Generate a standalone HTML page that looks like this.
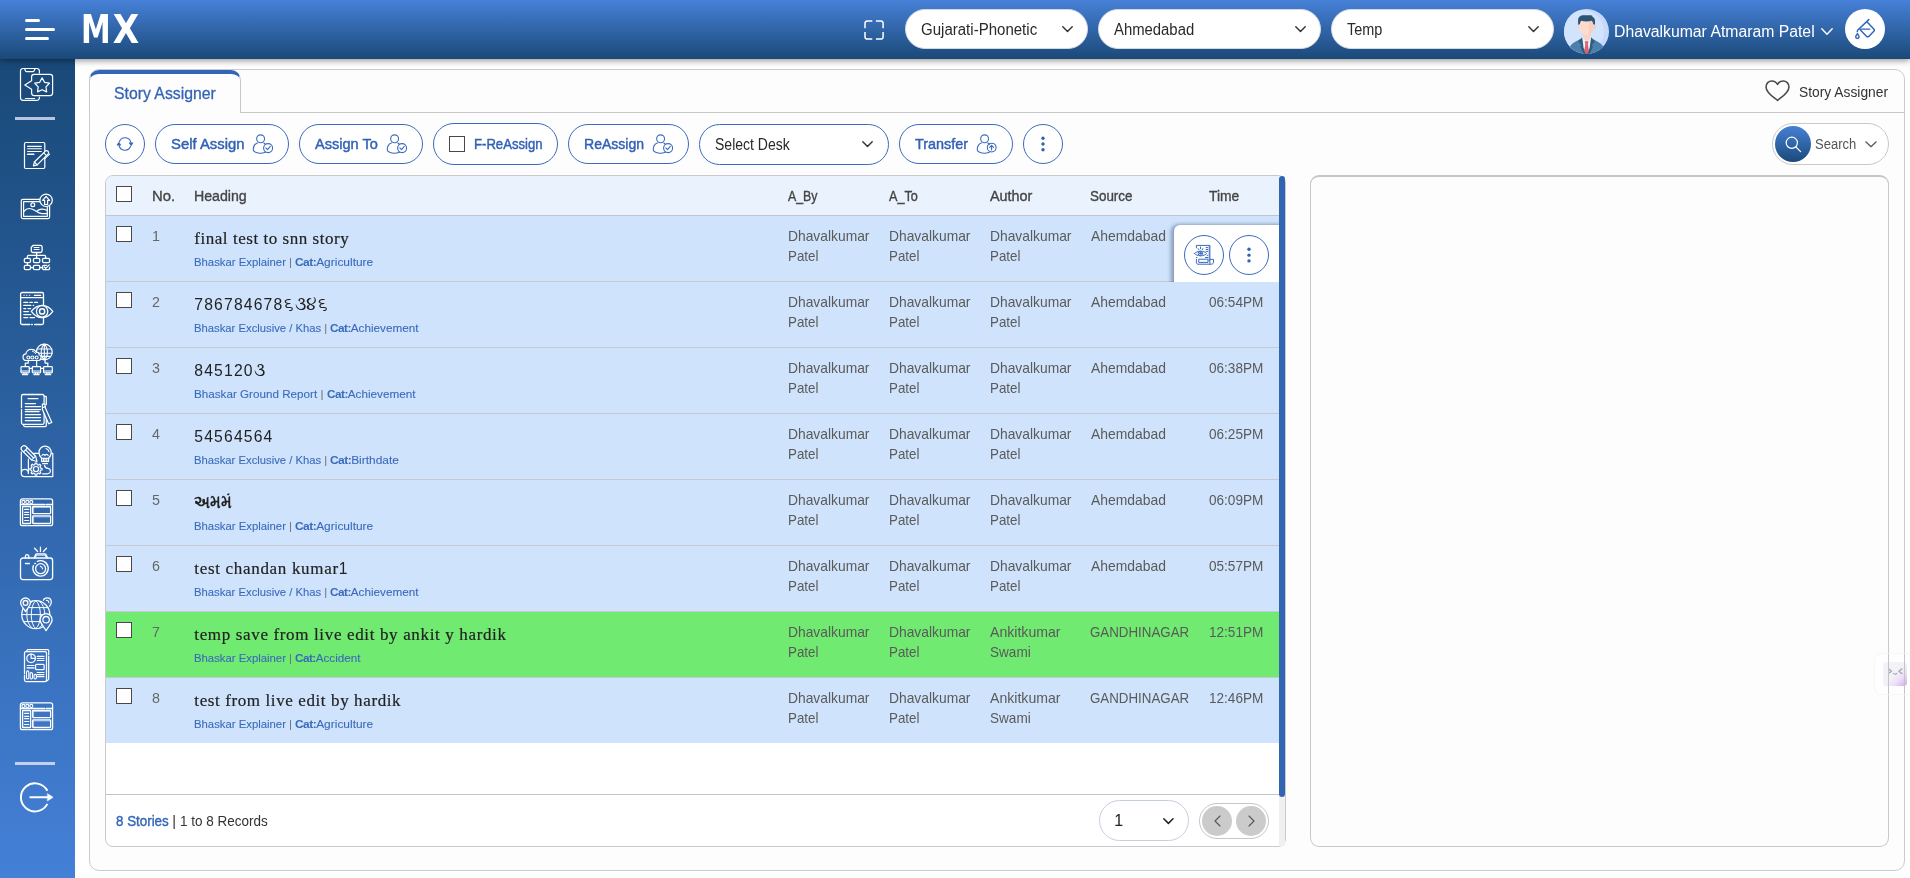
<!DOCTYPE html>
<html lang="en">
<head>
<meta charset="utf-8">
<title>Story Assigner</title>
<style>

*{box-sizing:border-box;margin:0;padding:0}
html,body{width:1910px;height:878px;background:#fff}
#app{position:absolute;left:0;top:0;width:1910px;height:878px;overflow:hidden;will-change:transform;background:#fff}
body{position:relative;font-family:"Liberation Sans",sans-serif;font-size:15px;color:#555}
.t{position:absolute;white-space:pre;line-height:1;display:block;transform-origin:0 0}
.a{position:absolute}
svg{position:absolute;overflow:visible}
.pill{position:absolute;border:1px solid #3b6bbd;border-radius:21px;background:#fff}
.sel{position:absolute;background:#fff;border-radius:20px;border:1px solid #d3d9e2}
.cb{position:absolute;width:16px;height:16px;background:#fff;border:1px solid #494949}
.row{position:absolute;left:106px;width:1173px;height:65px;background:#cfe4fc}
.sep{position:absolute;left:106px;width:1173px;height:1px;background:#c6c9ce}

</style>
</head>
<body>
<div id="app">
<div class="a" style="left:0;top:0;width:1910px;height:59px;background:linear-gradient(180deg,#4781d8 0%,#1a4978 100%);box-shadow:0 1px 7px rgba(0,0,0,.5);z-index:5"></div>
<div class="a" style="z-index:6;left:0;top:0;width:1910px;height:59px">
<div class="a" style="left:25px;top:19px;width:15px;height:3px;border-radius:2px;background:#fff"></div>
<div class="a" style="left:25px;top:28px;width:30px;height:3px;border-radius:2px;background:#fff"></div>
<div class="a" style="left:25px;top:37px;width:24px;height:3px;border-radius:2px;background:#fff"></div>
<span class="t" style="left:81.16px;top:11.44px;font-size:38.6px;color:#fff;font-family:'DejaVu Sans', sans-serif;font-weight:700;transform:scaleX(0.7735)">M<span style="display:inline-block;margin-left:3.09px;transform-origin:0 0;transform:scaleX(1.1489)">X</span></span>
<svg style="left:864.1px;top:20.1px" width="20" height="20" viewBox="0 0 20 20"><path d="M1 8.3V3.2A2.2 2.2 0 0 1 3.2 1H8.3M11.9 1H16.9A2.2 2.2 0 0 1 19.1 3.2V8.3M19.1 11.9V16.9A2.2 2.2 0 0 1 16.9 19.1H11.9M8.3 19.1H3.2A2.2 2.2 0 0 1 1 16.9V11.9" fill="none" stroke="#fff" stroke-width="1.5" stroke-linecap="butt"/></svg>
<div class="sel" style="left:905px;top:9px;width:183px;height:40px"></div>
<span class="t" style="left:920.64px;top:21.86px;font-size:16px;color:#2a2a2a;transform:scaleX(0.9396);">Gujarati-Phonetic</span>
<svg style="left:1061.6px;top:25.9px" width="11" height="6.3" viewBox="0 0 11 6.3"><path d="M0.8 0.8 L5.5 5.5 L10.2 0.8" fill="none" stroke="#333" stroke-width="1.45" stroke-linecap="round" stroke-linejoin="round"/></svg>
<div class="sel" style="left:1098px;top:9px;width:223px;height:40px"></div>
<span class="t" style="left:1114.37px;top:21.86px;font-size:16px;color:#2a2a2a;transform:scaleX(0.9292);">Ahmedabad</span>
<svg style="left:1294.6px;top:25.9px" width="11" height="6.3" viewBox="0 0 11 6.3"><path d="M0.8 0.8 L5.5 5.5 L10.2 0.8" fill="none" stroke="#333" stroke-width="1.45" stroke-linecap="round" stroke-linejoin="round"/></svg>
<div class="sel" style="left:1331px;top:9px;width:223px;height:40px"></div>
<span class="t" style="left:1347.08px;top:21.86px;font-size:16px;color:#2a2a2a;transform:scaleX(0.9030);">Temp</span>
<svg style="left:1527.6px;top:25.9px" width="11" height="6.3" viewBox="0 0 11 6.3"><path d="M0.8 0.8 L5.5 5.5 L10.2 0.8" fill="none" stroke="#333" stroke-width="1.45" stroke-linecap="round" stroke-linejoin="round"/></svg>
<svg style="left:1564px;top:9px" width="45" height="45" viewBox="0 0 45 45">
<defs><clipPath id="avc"><circle cx="22.5" cy="22.5" r="22.5"/></clipPath></defs>
<g clip-path="url(#avc)">
<rect width="45" height="45" fill="#c4d9fb"/>
<circle cx="18.5" cy="22.5" r="21.5" fill="#d1e3fd"/>
<path d="M5.6 38.4 C7.5 34 12.5 32 18.2 29.2 L22.6 40 L27.1 29.2 C32.5 32 37.8 34 39.6 38.4 L40 46 H5 Z" fill="#4b80ad"/>
<path d="M14.3 32.2 L18.2 28.3 L22.6 44.5 L19.5 45 L16.2 37.4 L17.4 36.2 Z" fill="#325d7d"/>
<path d="M30.9 32.2 L27.1 28.3 L22.6 44.5 L25.7 45 L29 37.4 L27.8 36.2 Z" fill="#325d7d"/>
<path d="M18.2 28.3 H27.1 L25.6 39 L22.6 45 L19.6 39 Z" fill="#e9f4fb"/>
<path d="M20.7 32.3 H24.5 L23.9 35.2 H21.3 Z M21.3 35.2 H23.9 L24.9 42 L22.6 45.6 L20.3 42 Z" fill="#e0626e"/>
<path d="M19.1 23 H26.8 V29.3 L22.9 32.4 L19.1 29.3 Z" fill="#fbd3c4"/>
<circle cx="15" cy="18" r="1.7" fill="#fcd4c5"/><circle cx="30" cy="18" r="1.7" fill="#fac6b5"/>
<path d="M15.6 11.5 H29.2 V19 C29.2 23 26 25.9 22.4 25.9 C18.8 25.9 15.6 23 15.6 19 Z" fill="#fddccf"/>
<path d="M24.8 12 H29.2 V19 C29.2 22.4 26.9 25.1 24 25.7 C25.3 22.5 25.4 16 24.8 12 Z" fill="#fbcdbd"/>
<path d="M14.1 15.8 V11.2 C14.1 8.2 16.6 6.3 19.6 6.3 H26.8 C28.1 6.3 28.7 7.1 28.5 8 C30.3 8.5 31 10 31 12 V15.8 L29.3 15.3 C29 13.8 28.6 12.6 27.9 11.7 C24.6 12.7 20 12.7 17.2 11.7 C16.5 12.6 16.1 13.8 15.8 15.3 Z" fill="#2e5575"/>
</g></svg>
<span class="t" style="left:1613.81px;top:23.66px;font-size:16px;color:#fff;transform:scaleX(0.9853);">Dhavalkumar Atmaram Patel</span>
<svg style="left:1820.7px;top:28px" width="12" height="7" viewBox="0 0 12 7"><path d="M0.8 0.8 L6.0 6.2 L11.2 0.8" fill="none" stroke="#fff" stroke-width="1.4" stroke-linecap="round" stroke-linejoin="round"/></svg>
<div class="a" style="left:1845px;top:9px;width:40px;height:40px;border-radius:50%;background:#fff"></div>
<svg style="left:1843px;top:7px" width="44" height="44" viewBox="0 0 44 44" fill="none" stroke="#3063b8" stroke-width="1.45" stroke-linecap="round" stroke-linejoin="round">
<path d="M25.8 12.6 L14.8 23 C14.3 23.5 14.3 24 14.3 24.7"/><path d="M24.1 15.1 L30.8 21.9 C31.6 22.7 31.6 23.5 30.8 24.3 L26 29.2 C25.2 30 24.2 30 23.4 29.2 L17.4 23.1"/><path d="M16.9 22.1 H26.8"/><path d="M14.4 26.8 C13.3 28.2 12.7 29 12.7 29.8 a1.7 1.7 0 0 0 3.4 0 C16.1 29 15.5 28.2 14.4 26.8 Z"/></svg>
</div>
<div class="a" style="left:0;top:59px;width:75px;height:819px;background:linear-gradient(180deg,#194978 0%,#4480d7 100%)"></div>
<div class="a" style="left:15px;top:117px;width:40px;height:3px;background:#b7c3df"></div>
<div class="a" style="left:15px;top:762px;width:40px;height:3px;background:#c3cfec"></div>
<svg style="left:15px;top:63px" width="44" height="44" viewBox="0 0 44 44" fill="none" stroke="#fff" stroke-width="1.22" stroke-linecap="round" stroke-linejoin="round"><path d="M24.4 9.9 V8 A2.5 2.5 0 0 0 21.9 5.5 H8 A2.5 2.5 0 0 0 5.5 8 V34.8 A2.5 2.5 0 0 0 8 37.3 H21.9 A2.5 2.5 0 0 0 24.4 34.8 V34.2"/>
<path d="M9.5 5.8 L10.6 8 Q10.9 8.6 11.6 8.6 H18 Q18.7 8.6 19 8 L20.1 5.8"/><path d="M10.4 35.5 H19.5"/>
<path d="M16.6 17.7 V13.8 A2.5 2.5 0 0 1 19.1 11.3 H35.1 A2.5 2.5 0 0 1 37.6 13.8 V30.1 A2.5 2.5 0 0 1 35.1 32.6 H19.1 A2.5 2.5 0 0 1 16.6 30.1 V26.2 L9.8 22 Z" fill="#1a4b7b"/>
<path d="M27.10 14.90 L29.51 19.28 L34.42 20.22 L31.00 23.87 L31.63 28.83 L27.10 26.70 L22.57 28.83 L23.20 23.87 L19.78 20.22 L24.69 19.28 Z"/></svg>
<svg style="left:15px;top:133px" width="44" height="44" viewBox="0 0 44 44" fill="none" stroke="#fff" stroke-width="1.22" stroke-linecap="round" stroke-linejoin="round"><rect x="9.5" y="9.5" width="20.3" height="26" rx="1.2"/>
<path d="M12.6 13.4 H26.3 M12.6 15.8 H26.3 M12.6 18.5 H26.3" stroke-width="1.1"/><path d="M12.6 21.2 H18.8" stroke-width="1.6"/>
<path d="M18.4 32.8 L19.4 29 L30.4 18.1 A2 2 0 0 1 33.2 20.9 L22.2 31.9 Z" fill="#1e4f83"/>
<path d="M19.4 29 L22.2 31.9 M28.7 19.8 L31.5 22.6 M30 25.4 L34.6 21.2" stroke-width="1.1"/></svg>
<svg style="left:15px;top:184px" width="44" height="44" viewBox="0 0 44 44" fill="none" stroke="#fff" stroke-width="1.22" stroke-linecap="round" stroke-linejoin="round"><path d="M25 15.3 H7.8 A1.5 1.5 0 0 0 6.3 16.8 V33.1 A1.5 1.5 0 0 0 7.8 34.6 H33.1 A1.5 1.5 0 0 0 34.6 33.1 V22"/>
<path d="M25 17.6 H8.6 V32.3 H32.3 V22.6" stroke-width="1.2"/>
<circle cx="31.1" cy="16.3" r="6.2" fill="#215389"/><path d="M31.1 12.5 L34.6 16.3 H32.6 V20.5 H29.6 V16.3 H27.6 Z" stroke-width="1.2"/>
<circle cx="17.8" cy="20.8" r="1.9" stroke-width="1.2"/>
<path d="M8.7 27.6 C10.5 25.3 12.5 24.4 14.5 24.5 C17.5 24.6 19.5 26.6 21.5 27.4 C24 24.8 29 24.3 32.2 26.6 M21.3 27.3 C23 28.8 25 29.6 27 29.6 H32.2" stroke-width="1.2"/></svg>
<svg style="left:15px;top:235px" width="44" height="44" viewBox="0 0 44 44" fill="none" stroke="#fff" stroke-width="1.3" stroke-linecap="round" stroke-linejoin="round"><path d="M18.3 10.3 H25.3 A1.8 1.8 0 0 1 27.1 12.1 V15.7 A1.8 1.8 0 0 1 25.3 17.5 H18.1 A1.8 1.8 0 0 1 16.3 15.7 V12.3 Z"/>
<path d="M19.2 12.5 H24 M19.2 14.5 H24" stroke-width="1.2"/>
<path d="M21.6 17.5 V23.2 M12.4 23.2 V21.6 A1.2 1.2 0 0 1 13.6 20.4 H29.4 A1.2 1.2 0 0 1 30.6 21.6 V23.2 M12.4 27.6 V30.3 M15.5 32.6 H18.4 M24.8 32.6 H27.5"/>
<rect x="9.3" y="23.3" width="6.2" height="4.3" rx="1.4"/><rect x="18.4" y="23.3" width="6.4" height="4.3" rx="1.4"/><rect x="27.5" y="23.3" width="7.1" height="4.3" rx="1.4"/>
<rect x="9.3" y="30.4" width="6.2" height="4.3" rx="1.4"/><rect x="18.4" y="30.4" width="6.4" height="4.3" rx="1.4"/>
<path d="M34.6 32.4 V33.3 A1.4 1.4 0 0 1 33.2 34.7 H28.9 A1.4 1.4 0 0 1 27.5 33.3 V31.8 A1.4 1.4 0 0 1 28.9 30.4 H31.6"/><path d="M29.3 32 L30.7 33.4 L34.3 29.8" stroke-width="1.2"/></svg>
<svg style="left:15px;top:286px" width="44" height="44" viewBox="0 0 44 44" fill="none" stroke="#fff" stroke-width="1.3" stroke-linecap="round" stroke-linejoin="round"><path d="M14.8 38.5 H7.1 A1.5 1.5 0 0 1 5.6 37 V8 A1.5 1.5 0 0 1 7.1 6.5 H27 A1.5 1.5 0 0 1 28.5 8 V37 A1.5 1.5 0 0 1 27 38.5 H19.6 M16.6 38.5 H17.4"/>
<path d="M5.6 11.6 H28.5"/><path d="M8.9 9.3 H9.3 M11.6 9.3 H12 M14.4 9.3 H14.8" stroke-width="1.1"/><path d="M19.3 9.3 H25.8" stroke-width="1.2"/>
<path d="M8.8 16.4 H12.8 M14.9 16.4 H17.3 M19.5 16.4 H22.6 M8.8 19.4 H15.8 M18.3 19.4 H18.6 M8.8 22.5 H10.8 M13 22.5 H15.5 M8.8 25.6 H13.5 M8.8 28.6 H15.8 M8.8 31.6 H12.8 M15 31.6 H19.5" stroke-width="1.25"/>
<path d="M16.3 25.3 C19.5 21.3 23 19.3 27.1 19.3 C31.2 19.3 34.7 21.3 37.8 25.3 C34.7 29.5 31.2 31.6 27.1 31.6 C23 31.6 19.5 29.5 16.3 25.3 Z" fill="#265a95"/>
<circle cx="27.1" cy="25.4" r="5.7"/><circle cx="27.1" cy="25.4" r="2.6" stroke-width="1.5"/></svg>
<svg style="left:15px;top:337px" width="44" height="44" viewBox="0 0 44 44" fill="none" stroke="#fff" stroke-width="1.17" stroke-linecap="round" stroke-linejoin="round"><circle cx="29.3" cy="15" r="7.9" stroke-width="1.2"/>
<path d="M22.6 12 H36 M21.6 16.3 H37 M23.2 19.4 H35.4 M29.3 7.2 V22.8 M29.3 7.2 C25.2 10.5 25.2 19.5 29.3 22.8 M29.3 7.2 C33.4 10.5 33.4 19.5 29.3 22.8" stroke-width="1.1"/>
<path d="M11.6 23.5 C9.2 23.5 8 21.8 8 20.2 C8 18.4 9.3 17 11 16.9 C11 14.2 13.4 12.3 16.2 12.3 C18.6 12.3 20.4 13.4 21.3 15.4 C21.8 15.2 22.3 15.2 22.8 15.4 C23.8 15.8 24.2 16.6 24.1 17.7 C25.4 18.1 26.1 19.2 26.1 20.5 C26.1 22.2 24.9 23.5 23.2 23.5 Z" fill="#295d9b"/>
<circle cx="13.4" cy="20.5" r="1.5" stroke-width="1.1"/><circle cx="17.4" cy="20.5" r="1.5" stroke-width="1.1"/><circle cx="21.6" cy="20.5" r="1.5" stroke-width="1.1"/>
<path d="M17.5 14.3 C18.8 14.6 19.9 15.5 20.5 16.6" stroke-width="1"/>
<path d="M13.3 23.6 V26.1 H10.3 V29.4 M21.6 23.6 V29.4 M30.1 23.4 V26.1 H32.8 V29.4 M14.3 31.4 H17.3 M25.6 31.4 H28.6" stroke-width="1.25"/>
<rect x="6" y="29.6" width="8.3" height="6.2" rx="0.8"/><rect x="17.3" y="29.6" width="8.3" height="6.2" rx="0.8"/><rect x="28.6" y="29.6" width="8.7" height="6.2" rx="0.8"/>
<path d="M6 34 H14.3 M17.3 34 H25.6 M28.6 34 H37.3 M7.4 37.6 H12.8 M18.8 37.6 H24.2 M30.2 37.6 H35.8 M9 35.8 V37.6 M11.2 35.8 V37.6 M20.4 35.8 V37.6 M22.6 35.8 V37.6 M31.9 35.8 V37.6 M34.1 35.8 V37.6" stroke-width="1.1"/></svg>
<svg style="left:15px;top:388px" width="44" height="44" viewBox="0 0 44 44" fill="none" stroke="#fff" stroke-width="1.26" stroke-linecap="round" stroke-linejoin="round"><path d="M6.5 19.6 V8 A1.5 1.5 0 0 1 8 6.5 H27.6 A1.5 1.5 0 0 1 29.1 8 V34.8 A1.5 1.5 0 0 1 27.6 36.3 H8 A1.5 1.5 0 0 1 6.5 34.8 V21.5"/>
<path d="M29.3 8.3 H30.4 A0.9 0.9 0 0 1 31.3 9.2 V16.5 M8.3 36.6 L8.8 37.8 Q9.1 38.6 10 38.6 H30.3 A1 1 0 0 0 31.3 37.6 V30" stroke-width="1.25"/>
<path d="M13 10.5 H22.9 M10.3 15.5 H20.5 M10.3 18.5 H25.5 M10.3 21.5 H25.5 M10.3 23.7 H24 M10.3 26.6 H25.5 M10.3 29.6 H25.5 M10.3 32.6 H25.5" stroke-width="1.25"/>
<path d="M27.4 16 H30.1 V19.3 L36.8 34.4 L33.6 35.8 L27.4 21.5 Z" fill="#2b61a1" stroke-width="1.25"/><path d="M27.6 19.8 L30.4 18.6" stroke-width="1.1"/></svg>
<svg style="left:15px;top:439px" width="44" height="44" viewBox="0 0 44 44" fill="none" stroke="#fff" stroke-width="1.22" stroke-linecap="round" stroke-linejoin="round"><path d="M6.3 13 V34.6 M18.6 14.3 H24.4 M36.2 14.3 H37.8 V37.6 H9.6 C7.6 37.6 6.3 36.2 6.3 34.2 C6.3 32 7.8 30.3 9.9 30.3 C11.9 30.3 13.4 31.8 13.4 34.4 V20.2"/>
<path d="M7 7.6 A2.6 2.6 0 0 1 10.8 7.2 L20.6 17.2 L22 22.5 L16.7 21 L6.8 11.2 A2.6 2.6 0 0 1 7 7.6 Z" fill="#2e64a7"/><path d="M8.6 12.8 L12.4 9 M16.8 20.9 L20.6 17.2 M10.6 10.9 L18.6 19" stroke-width="1.1"/>
<path d="M26.6 19.2 C24.8 17.6 24 15.4 24 13.4 C24 9.8 26.6 7.2 30.1 7.2 C33.6 7.2 36.2 9.8 36.2 13.4 C36.2 15.4 35.4 17.6 33.6 19.2 V22.4 H26.6 Z" fill="#2e64a7"/>
<path d="M26.6 19.2 H33.6 M28.4 19.4 V22.2 M30.1 19.4 V22.2 M31.8 19.4 V22.2 M27.6 24.6 H32.6 L30.1 24.6 M28.8 24.4 L30.1 24.8 L31.4 24.4 M31 9.4 C32.6 9.9 33.6 11 34 12.6 M27 16.6 C27.8 15 29.2 15 30 16.6 C30.8 15 32.4 15 33.2 16.6" stroke-width="1.1"/>
<path d="M25.59 29.09 L27.04 29.26 L27.04 30.94 L25.59 31.11 L24.96 32.63 L25.86 33.78 L24.68 34.96 L23.53 34.06 L22.01 34.69 L21.84 36.14 L20.16 36.14 L19.99 34.69 L18.47 34.06 L17.32 34.96 L16.14 33.78 L17.04 32.63 L16.41 31.11 L14.96 30.94 L14.96 29.26 L16.41 29.09 L17.04 27.57 L16.14 26.42 L17.32 25.24 L18.47 26.14 L19.99 25.51 L20.16 24.06 L21.84 24.06 L22.01 25.51 L23.53 26.14 L24.68 25.24 L25.86 26.42 L24.96 27.57 Z" stroke-width="1.2"/><circle cx="21" cy="30.1" r="2.6"/>
<path d="M29.6 26.4 C29.8 28.4 31.4 29.2 33 29.4 C35.4 29.8 36 32 34.8 33.6 C34 34.6 33 34.8 32 34.8 H27.6" stroke-width="1.2"/></svg>
<svg style="left:15px;top:490px" width="44" height="44" viewBox="0 0 44 44" fill="none" stroke="#fff" stroke-width="1.26" stroke-linecap="round" stroke-linejoin="round"><path d="M12 35.7 H7.4 A2 2 0 0 1 5.4 33.7 V10.9 A2 2 0 0 1 7.4 8.9 H35.6 A2 2 0 0 1 37.6 10.9 V33.7 A2 2 0 0 1 35.6 35.7 H13.2"/>
<path d="M5.4 14.5 H29.8 M31.2 14.5 H37.6"/>
<circle cx="8.4" cy="11.9" r="1.55" stroke-width="1.1"/><circle cx="12.3" cy="11.9" r="1.55" stroke-width="1.1"/><circle cx="16.3" cy="11.9" r="1.55" stroke-width="1.1"/>
<rect x="7.6" y="16.5" width="8" height="17" rx="0.6"/>
<path d="M9.6 19.3 H13.7 M9.6 22.3 H13.7 M9.6 24.6 H13.7 M9.6 27.5 H13.7 M9.6 30.5 H13.7" stroke-width="1.2"/>
<rect x="17.6" y="16.5" width="18" height="7.1" rx="0.8"/><rect x="17.6" y="25.9" width="18" height="7.6" rx="0.8"/>
<path d="M18.6 17.4 H34.8 M18.6 26.9 H34.8 M18.6 17.4 V22.8 M18.6 26.9 V32.6" stroke-width="0.7" opacity="0.75"/></svg>
<svg style="left:15px;top:541px" width="44" height="44" viewBox="0 0 44 44" fill="none" stroke="#fff" stroke-width="1.3" stroke-linecap="round" stroke-linejoin="round"><path d="M8 17 H35.1 A2.5 2.5 0 0 1 37.6 19.5 V36.1 A2.5 2.5 0 0 1 35.1 38.6 H8 A2.5 2.5 0 0 1 5.5 36.1 V19.5 A2.5 2.5 0 0 1 8 17 Z"/>
<path d="M19.2 17 L20.6 13.6 Q21 12.8 21.8 12.8 H29.8 Q30.6 12.8 31 13.6 L32.6 17"/><path d="M20.3 16.6 L21.6 14.1 H30 L31.3 16.6" stroke-width="1"/>
<path d="M10.4 17 V15.4 A1.7 1.7 0 0 1 13.8 15.4 V17" stroke-width="1.3"/>
<path d="M25.45 6.2 V10.5 M19.6 7.3 L22.6 10.5 M31.5 7.3 L28.4 10.5" stroke-width="1.3"/>
<path d="M22.4 20.4 A7.7 7.7 0 1 1 18.4 24.6" /><circle cx="25.6" cy="27.7" r="5"/><path d="M25.2 25.2 C26.4 25.6 27.3 26.6 27.7 27.9" stroke-width="1.1"/>
<path d="M10.4 22.5 H14.4 M19.8 22.5 H20.4"/></svg>
<svg style="left:15px;top:592px" width="44" height="44" viewBox="0 0 44 44" fill="none" stroke="#fff" stroke-width="1.26" stroke-linecap="round" stroke-linejoin="round"><circle cx="20.8" cy="22.7" r="14" stroke-width="1.25"/>
<path d="M8.6 15.6 H33 M6.9 22.6 H34.7 M8.6 29.6 H33 M20.8 8.7 C14.6 13 14.6 32.4 20.8 36.7 M20.8 8.7 C27 13 27 32.4 20.8 36.7 M17.4 9.2 C9.8 14 9.8 31.4 17.4 36.2 M24.2 9.2 C31.8 14 31.8 31.4 24.2 36.2" stroke-width="1"/>
<path d="M10.5 19.6 C8.295 15.685 5.6 13.938 5.6 10.9 A4.9 4.9 0 0 1 15.4 10.9 C15.4 13.938 12.705 15.685 10.5 19.6 Z" fill="#366eb8"/><circle cx="10.5" cy="10.9" r="2.4"/>
<path d="M28.4 8.2 C29 6.6 30.4 5.9 32.1 5.9 C34.6 5.9 36.3 7.8 36.3 10.2 C36.3 11.6 35.6 12.9 34.6 14.2" fill="none"/><path d="M31.4 8.4 C32.8 8.2 33.9 9.2 33.8 10.6" stroke-width="1.2"/>
<path d="M31.1 38.7 C28.400000000000002 33.75 25.1 31.419999999999998 25.1 27.7 A6 6 0 0 1 37.1 27.7 C37.1 31.419999999999998 33.800000000000004 33.75 31.1 38.7 Z" fill="#366eb8"/><circle cx="31.1" cy="27.7" r="3.2"/></svg>
<svg style="left:15px;top:643px" width="44" height="44" viewBox="0 0 44 44" fill="none" stroke="#fff" stroke-width="1.26" stroke-linecap="round" stroke-linejoin="round"><path d="M9.5 30.4 V10.1 A1.5 1.5 0 0 1 11 8.6 H30 A1.5 1.5 0 0 1 31.5 10.1 V37.1 A1.5 1.5 0 0 1 30 38.6 H11 A1.5 1.5 0 0 1 9.5 37.1 V32.2"/>
<path d="M11.4 8.4 L12.2 7 Q12.5 6.5 13.2 6.5 H32.6 A1.1 1.1 0 0 1 33.7 7.6 V11.8 M33.7 13.4 V35.6 Q33.7 36.4 33 37 L31.7 38" stroke-width="1.25"/>
<circle cx="16.1" cy="15.3" r="4.3" stroke-width="1.25"/><path d="M16.1 11 V15.3 H20.4" stroke-width="1.2"/>
<path d="M22.2 13.4 H29 M22.2 15.5 H29 M22.2 17.5 H29 M12.2 22.5 H19 M22.2 29.5 H29 M22.2 31.6 H29 M22.2 33.6 H29" stroke-width="1.15"/><path d="M12.2 24.8 H19" stroke-width="1.7" opacity="0.8"/>
<rect x="20.6" y="21.3" width="8.5" height="5.3" rx="0.9"/>
<rect x="11.5" y="27.9" width="2.3" height="8" rx="1.1" stroke-width="1.1"/><rect x="15.1" y="29.6" width="2.4" height="6.3" rx="1.1" stroke-width="1.1"/><rect x="19" y="31.4" width="2.4" height="4.5" rx="1.1" stroke-width="1.1"/></svg>
<svg style="left:15px;top:694.4px" width="44" height="44" viewBox="0 0 44 44" fill="none" stroke="#fff" stroke-width="1.26" stroke-linecap="round" stroke-linejoin="round"><path d="M12 35.7 H7.4 A2 2 0 0 1 5.4 33.7 V10.9 A2 2 0 0 1 7.4 8.9 H35.6 A2 2 0 0 1 37.6 10.9 V33.7 A2 2 0 0 1 35.6 35.7 H13.2"/>
<path d="M5.4 14.5 H29.8 M31.2 14.5 H37.6"/>
<circle cx="8.4" cy="11.9" r="1.55" stroke-width="1.1"/><circle cx="12.3" cy="11.9" r="1.55" stroke-width="1.1"/><circle cx="16.3" cy="11.9" r="1.55" stroke-width="1.1"/>
<rect x="7.6" y="16.5" width="8" height="17" rx="0.6"/>
<path d="M9.6 19.3 H13.7 M9.6 22.3 H13.7 M9.6 24.6 H13.7 M9.6 27.5 H13.7 M9.6 30.5 H13.7" stroke-width="1.2"/>
<rect x="17.6" y="16.5" width="18" height="7.1" rx="0.8"/><rect x="17.6" y="25.9" width="18" height="7.6" rx="0.8"/>
<path d="M18.6 17.4 H34.8 M18.6 26.9 H34.8 M18.6 17.4 V22.8 M18.6 26.9 V32.6" stroke-width="0.7" opacity="0.75"/></svg>
<svg style="left:15px;top:775px" width="44" height="44" viewBox="0 0 44 44" fill="none" stroke="#fff" stroke-width="1.22" stroke-linecap="round" stroke-linejoin="round"><path d="M32.4 15.8 A14.05 14.05 0 1 0 32.4 28.9" stroke-width="1.95" stroke-linecap="butt"/>
<path d="M15.3 22.3 H33" stroke-width="2"/><path d="M32.6 18.8 L38.1 22.3 L32.6 25.8 Z" fill="#fff" stroke-width="0.6"/></svg>
<div class="a" style="left:89px;top:69px;width:1816px;height:802px;border:1px solid #cbcbcb;border-radius:10px;background:#fdfdfd"></div>
<div class="a" style="left:240px;top:112px;width:1664px;height:1px;background:#c8c8c8"></div>
<div class="a" style="left:89px;top:69.6px;width:152px;height:43.4px;border-top:4.6px solid #3265b5;border-left:1px solid #c8c8c8;border-right:1px solid #c8c8c8;border-radius:10px 10px 0 0;background:#fdfdfd"></div>
<span class="t" style="left:114.02px;top:84.61px;font-size:17px;color:#3463b3;transform:scaleX(0.9288);-webkit-text-stroke:0.3px #3463b3;">Story Assigner</span>
<svg style="left:1764.8px;top:80.2px" width="25" height="22" viewBox="0 0 26 23"><path d="M13 21.3 C9 18 1 13.5 1 7.3 C1 3.6 3.8 1 7 1 C9.6 1 11.8 2.4 13 4.6 C14.2 2.4 16.4 1 19 1 C22.2 1 25 3.6 25 7.3 C25 13.5 17 18 13 21.3 Z" fill="none" stroke="#4a4a4a" stroke-width="1.6" stroke-linejoin="round"/></svg>
<span class="t" style="left:1798.97px;top:84.73px;font-size:14.5px;color:#333;transform:scaleX(0.9525);">Story Assigner</span>
<div class="pill" style="left:105px;top:124px;width:40px;height:40px;border-radius:50%"></div>
<svg style="left:114.9px;top:133.8px" width="20" height="20" viewBox="0 0 20 20" fill="none" stroke="#3b6bbd" stroke-width="1.15" stroke-linecap="round" stroke-linejoin="round">
<path d="M4.5 7.4 A6 6 0 0 1 15.9 8.6"/><path d="M14.5 9 H17.7 L16.1 11.3 Z" fill="#3b6bbd"/><path d="M15.5 12.6 A6 6 0 0 1 4.1 11.4"/><path d="M2.3 11 H5.5 L3.9 8.7 Z" fill="#3b6bbd"/></svg>
<div class="pill" style="left:155px;top:124px;width:134px;height:40px"></div>
<span class="t" style="left:171.15px;top:136.30px;font-size:15px;color:#3262b5;transform:scaleX(0.9902);-webkit-text-stroke:0.45px #3262b5;">Self Assign</span>
<svg style="left:246px;top:128px" width="32" height="32" viewBox="0 0 32 32" fill="none" stroke="#3b6bbd" stroke-width="1.1" stroke-linecap="round" stroke-linejoin="round"><circle cx="14.6" cy="10.8" r="3.95"/><path d="M11.4 15 C8.6 16 7.3 18.6 7.2 21.6 C7.2 23 8 23.7 9.6 24.3 C12.2 25.3 16.4 25.4 19.4 24.2 M17.8 15 C18.4 15.3 18.9 15.7 19.4 16.3"/><circle cx="22.1" cy="20.1" r="4.5"/><path d="M19.8 19.8 l1.7 1.8 l2.8 -3.2"/></svg>
<div class="pill" style="left:299px;top:124px;width:124px;height:40px"></div>
<span class="t" style="left:315.19px;top:136.30px;font-size:15px;color:#3262b5;transform:scaleX(0.9697);-webkit-text-stroke:0.45px #3262b5;">Assign To</span>
<svg style="left:379.6px;top:128px" width="32" height="32" viewBox="0 0 32 32" fill="none" stroke="#3b6bbd" stroke-width="1.1" stroke-linecap="round" stroke-linejoin="round"><circle cx="14.6" cy="10.8" r="3.95"/><path d="M11.4 15 C8.6 16 7.3 18.6 7.2 21.6 C7.2 23 8 23.7 9.6 24.3 C12.2 25.3 16.4 25.4 19.4 24.2 M17.8 15 C18.4 15.3 18.9 15.7 19.4 16.3"/><circle cx="22.1" cy="20.1" r="4.5"/><path d="M19.8 19.8 l1.7 1.8 l2.8 -3.2"/></svg>
<div class="pill" style="left:433px;top:123px;width:125px;height:42px"></div>
<div class="cb" style="left:449px;top:136px"></div>
<span class="t" style="left:474.12px;top:136.30px;font-size:15px;color:#3262b5;transform:scaleX(0.8746);-webkit-text-stroke:0.45px #3262b5;">F-ReAssign</span>
<div class="pill" style="left:568px;top:124px;width:121px;height:40px"></div>
<span class="t" style="left:584.26px;top:136.30px;font-size:15px;color:#3262b5;transform:scaleX(0.9352);-webkit-text-stroke:0.45px #3262b5;">ReAssign</span>
<svg style="left:645.8px;top:128px" width="32" height="32" viewBox="0 0 32 32" fill="none" stroke="#3b6bbd" stroke-width="1.1" stroke-linecap="round" stroke-linejoin="round"><circle cx="14.6" cy="10.8" r="3.95"/><path d="M11.4 15 C8.6 16 7.3 18.6 7.2 21.6 C7.2 23 8 23.7 9.6 24.3 C12.2 25.3 16.4 25.4 19.4 24.2 M17.8 15 C18.4 15.3 18.9 15.7 19.4 16.3"/><circle cx="22.1" cy="20.1" r="4.5"/><path d="M19.8 19.8 l1.7 1.8 l2.8 -3.2"/></svg>
<div class="pill" style="left:698.6px;top:124px;width:190.4px;height:41px"></div>
<span class="t" style="left:714.86px;top:136.96px;font-size:16px;color:#2a2a2a;transform:scaleX(0.8763);">Select Desk</span>
<svg style="left:862.4px;top:141.4px" width="11" height="6.3" viewBox="0 0 11 6.3"><path d="M0.8 0.8 L5.5 5.5 L10.2 0.8" fill="none" stroke="#333" stroke-width="1.45" stroke-linecap="round" stroke-linejoin="round"/></svg>
<div class="pill" style="left:899px;top:124px;width:114px;height:40px"></div>
<span class="t" style="left:914.89px;top:136.30px;font-size:15px;color:#3262b5;transform:scaleX(0.9608);-webkit-text-stroke:0.45px #3262b5;">Transfer</span>
<svg style="left:970px;top:128px" width="32" height="32" viewBox="0 0 32 32" fill="none" stroke="#3b6bbd" stroke-width="1.1" stroke-linecap="round" stroke-linejoin="round"><circle cx="14.6" cy="10.8" r="3.95"/><path d="M11.4 15 C8.6 16 7.3 18.6 7.2 21.6 C7.2 23 8 23.7 9.6 24.3 C12.2 25.3 16.4 25.4 19.4 24.2 M17.8 15 C18.4 15.3 18.9 15.7 19.4 16.3"/><circle cx="21.7" cy="19.6" r="4.4"/><path d="M21.6 22 v-4.3 M19.6 19.4 l2 -2.1 l2 2.1"/></svg>
<div class="pill" style="left:1022.9px;top:124px;width:40px;height:40px;border-radius:50%"></div>
<svg style="left:1032.6px;top:134px" width="20" height="20" viewBox="0 0 20 20"><circle cx="10" cy="4.2" r="1.7" fill="#3262b5"/><circle cx="10" cy="10.05" r="1.7" fill="#3262b5"/><circle cx="10" cy="15.8" r="1.7" fill="#3262b5"/></svg>
<div class="a" style="left:1772px;top:123px;width:117px;height:42px;border:1px solid #c9c9c9;border-radius:21px;background:#fff"></div>
<div class="a" style="left:1775px;top:126px;width:36px;height:36px;border-radius:50%;background:linear-gradient(180deg,#4680d6 0%,#1a4a7a 100%)"></div>
<svg style="left:1785px;top:136px" width="17" height="17" viewBox="0 0 17 17" fill="none" stroke="#fff" stroke-width="1.2" stroke-linecap="round"><circle cx="6.8" cy="6.8" r="5.6"/><path d="M11 11 L15.6 15.6"/></svg>
<span class="t" style="left:1814.61px;top:136.75px;font-size:14px;color:#555;transform:scaleX(0.9296);">Search</span>
<svg style="left:1865px;top:141px" width="12" height="6.5" viewBox="0 0 12 6.5"><path d="M0.8 0.8 L6.0 5.7 L11.2 0.8" fill="none" stroke="#555" stroke-width="1.2" stroke-linecap="round" stroke-linejoin="round"/></svg>
<div class="a" style="left:105px;top:175px;width:1181px;height:672px;border:1px solid #c9c9c9;border-radius:8px;background:#fff;overflow:hidden"></div>
<div class="a" style="left:106px;top:176px;width:1173px;height:39px;background:#eaf2fe;border-radius:7px 0 0 0"></div>
<div class="sep" style="top:215px;background:#c4c4c4"></div>
<div class="cb" style="left:116px;top:186px"></div>
<span class="t" style="left:151.86px;top:188.87px;font-size:14.8px;color:#444;transform:scaleX(1.0040);-webkit-text-stroke:0.35px #444;">No.</span>
<span class="t" style="left:193.81px;top:188.87px;font-size:14.8px;color:#444;transform:scaleX(0.9567);-webkit-text-stroke:0.35px #444;">Heading</span>
<span class="t" style="left:787.92px;top:188.87px;font-size:14.8px;color:#444;transform:scaleX(0.8355);-webkit-text-stroke:0.35px #444;">A_By</span>
<span class="t" style="left:889.12px;top:188.87px;font-size:14.8px;color:#444;transform:scaleX(0.8554);-webkit-text-stroke:0.35px #444;">A_To</span>
<span class="t" style="left:989.74px;top:188.87px;font-size:14.8px;color:#444;transform:scaleX(0.9706);-webkit-text-stroke:0.35px #444;">Author</span>
<span class="t" style="left:1089.75px;top:188.87px;font-size:14.8px;color:#444;transform:scaleX(0.9061);-webkit-text-stroke:0.35px #444;">Source</span>
<span class="t" style="left:1209.35px;top:188.87px;font-size:14.8px;color:#444;transform:scaleX(0.9368);-webkit-text-stroke:0.35px #444;">Time</span>
<div class="row" style="top:216px;background:#cfe4fc"></div>
<div class="sep" style="top:281px"></div>
<div class="cb" style="left:116px;top:226px"></div>
<span class="t" style="left:151.88px;top:229.15px;font-size:14px;color:#666;transform:scaleX(1.0174);">1</span>
<span class="t" style="left:194.3px;top:227.10px;line-height:24px;font-size:17px;color:#222"><span style="font-family:'Liberation Serif', serif;font-size:17px;letter-spacing:0.536px;-webkit-text-stroke:0.2px #222">final test to snn story</span></span>
<span class="t" style="left:194.07px;top:256.18px;font-size:11.6px;transform:scaleX(0.9772);"><span style="color:#3a6abb;-webkit-text-stroke:0.1px #3a6abb;">Bhaskar Explainer </span><span style="color:#6e6e6e;">|</span></span>
<span class="t" style="left:295.21px;top:256.18px;font-size:11.6px;transform:scaleX(1.0296);"><span style="color:#3a6abb;font-weight:700;letter-spacing:-0.5px;">Cat:</span><span style="color:#3a6abb;-webkit-text-stroke:0.1px #3a6abb;">Agriculture</span></span>
<span class="t" style="left:787.77px;top:228.73px;font-size:14.5px;color:#5a5a5a;transform:scaleX(0.9537);">Dhavalkumar</span>
<span class="t" style="left:787.81px;top:248.73px;font-size:14.5px;color:#5a5a5a;transform:scaleX(0.9190);">Patel</span>
<span class="t" style="left:889.17px;top:228.73px;font-size:14.5px;color:#5a5a5a;transform:scaleX(0.9537);">Dhavalkumar</span>
<span class="t" style="left:889.21px;top:248.73px;font-size:14.5px;color:#5a5a5a;transform:scaleX(0.9190);">Patel</span>
<span class="t" style="left:989.87px;top:228.73px;font-size:14.5px;color:#5a5a5a;transform:scaleX(0.9537);">Dhavalkumar</span>
<span class="t" style="left:989.91px;top:248.73px;font-size:14.5px;color:#5a5a5a;transform:scaleX(0.9190);">Patel</span>
<span class="t" style="left:1090.97px;top:228.73px;font-size:14.5px;color:#5a5a5a;transform:scaleX(0.9593);">Ahemdabad</span>
<div class="row" style="top:282px;background:#cfe4fc"></div>
<div class="sep" style="top:347px"></div>
<div class="cb" style="left:116px;top:292px"></div>
<span class="t" style="left:151.88px;top:295.15px;font-size:14px;color:#666;transform:scaleX(1.0174);">2</span>
<span class="t" style="left:194.3px;top:293.00px;line-height:24px;font-size:17px;color:#222"><span style="font-size:15.7px;letter-spacing:1.17px">786784678</span><span style="display:inline-block;font-size:17px;letter-spacing:0.3px;margin-left:0.6px;transform-origin:0 76%;transform:scale(1.02,1.14)">૬૩૪૬</span></span>
<span class="t" style="left:194.07px;top:322.18px;font-size:11.6px;transform:scaleX(0.9722);"><span style="color:#3a6abb;-webkit-text-stroke:0.1px #3a6abb;">Bhaskar Exclusive / Khas </span><span style="color:#6e6e6e;">|</span></span>
<span class="t" style="left:330.42px;top:322.18px;font-size:11.6px;transform:scaleX(1.0113);"><span style="color:#3a6abb;font-weight:700;letter-spacing:-0.5px;">Cat:</span><span style="color:#3a6abb;-webkit-text-stroke:0.1px #3a6abb;">Achievement</span></span>
<span class="t" style="left:787.77px;top:294.73px;font-size:14.5px;color:#5a5a5a;transform:scaleX(0.9537);">Dhavalkumar</span>
<span class="t" style="left:787.81px;top:314.73px;font-size:14.5px;color:#5a5a5a;transform:scaleX(0.9190);">Patel</span>
<span class="t" style="left:889.17px;top:294.73px;font-size:14.5px;color:#5a5a5a;transform:scaleX(0.9537);">Dhavalkumar</span>
<span class="t" style="left:889.21px;top:314.73px;font-size:14.5px;color:#5a5a5a;transform:scaleX(0.9190);">Patel</span>
<span class="t" style="left:989.87px;top:294.73px;font-size:14.5px;color:#5a5a5a;transform:scaleX(0.9537);">Dhavalkumar</span>
<span class="t" style="left:989.91px;top:314.73px;font-size:14.5px;color:#5a5a5a;transform:scaleX(0.9190);">Patel</span>
<span class="t" style="left:1090.97px;top:294.73px;font-size:14.5px;color:#5a5a5a;transform:scaleX(0.9593);">Ahemdabad</span>
<span class="t" style="left:1209.37px;top:294.73px;font-size:14.5px;color:#5a5a5a;transform:scaleX(0.9362);">06:54PM</span>
<div class="row" style="top:348px;background:#cfe4fc"></div>
<div class="sep" style="top:413px"></div>
<div class="cb" style="left:116px;top:358px"></div>
<span class="t" style="left:151.88px;top:361.15px;font-size:14px;color:#666;transform:scaleX(1.0174);">3</span>
<span class="t" style="left:194.3px;top:359.00px;line-height:24px;font-size:17px;color:#222"><span style="font-size:15.7px;letter-spacing:1.17px">845120</span><span style="display:inline-block;font-size:17px;letter-spacing:0.3px;margin-left:0.6px;transform-origin:0 76%;transform:scale(1.02,1.14)">૩</span></span>
<span class="t" style="left:194.04px;top:388.18px;font-size:11.6px;transform:scaleX(1.0063);"><span style="color:#3a6abb;-webkit-text-stroke:0.1px #3a6abb;">Bhaskar Ground Report </span><span style="color:#6e6e6e;">|</span></span>
<span class="t" style="left:326.62px;top:388.18px;font-size:11.6px;transform:scaleX(1.0113);"><span style="color:#3a6abb;font-weight:700;letter-spacing:-0.5px;">Cat:</span><span style="color:#3a6abb;-webkit-text-stroke:0.1px #3a6abb;">Achievement</span></span>
<span class="t" style="left:787.77px;top:360.73px;font-size:14.5px;color:#5a5a5a;transform:scaleX(0.9537);">Dhavalkumar</span>
<span class="t" style="left:787.81px;top:380.73px;font-size:14.5px;color:#5a5a5a;transform:scaleX(0.9190);">Patel</span>
<span class="t" style="left:889.17px;top:360.73px;font-size:14.5px;color:#5a5a5a;transform:scaleX(0.9537);">Dhavalkumar</span>
<span class="t" style="left:889.21px;top:380.73px;font-size:14.5px;color:#5a5a5a;transform:scaleX(0.9190);">Patel</span>
<span class="t" style="left:989.87px;top:360.73px;font-size:14.5px;color:#5a5a5a;transform:scaleX(0.9537);">Dhavalkumar</span>
<span class="t" style="left:989.91px;top:380.73px;font-size:14.5px;color:#5a5a5a;transform:scaleX(0.9190);">Patel</span>
<span class="t" style="left:1090.97px;top:360.73px;font-size:14.5px;color:#5a5a5a;transform:scaleX(0.9593);">Ahemdabad</span>
<span class="t" style="left:1209.37px;top:360.73px;font-size:14.5px;color:#5a5a5a;transform:scaleX(0.9362);">06:38PM</span>
<div class="row" style="top:414px;background:#cfe4fc"></div>
<div class="sep" style="top:479px"></div>
<div class="cb" style="left:116px;top:424px"></div>
<span class="t" style="left:151.88px;top:427.15px;font-size:14px;color:#666;transform:scaleX(1.0174);">4</span>
<span class="t" style="left:194.3px;top:425.00px;line-height:24px;font-size:17px;color:#222"><span style="font-size:15.7px;letter-spacing:1.17px">54564564</span></span>
<span class="t" style="left:194.07px;top:454.18px;font-size:11.6px;transform:scaleX(0.9722);"><span style="color:#3a6abb;-webkit-text-stroke:0.1px #3a6abb;">Bhaskar Exclusive / Khas </span><span style="color:#6e6e6e;">|</span></span>
<span class="t" style="left:330.41px;top:454.18px;font-size:11.6px;transform:scaleX(1.0294);"><span style="color:#3a6abb;font-weight:700;letter-spacing:-0.5px;">Cat:</span><span style="color:#3a6abb;-webkit-text-stroke:0.1px #3a6abb;">Birthdate</span></span>
<span class="t" style="left:787.77px;top:426.73px;font-size:14.5px;color:#5a5a5a;transform:scaleX(0.9537);">Dhavalkumar</span>
<span class="t" style="left:787.81px;top:446.73px;font-size:14.5px;color:#5a5a5a;transform:scaleX(0.9190);">Patel</span>
<span class="t" style="left:889.17px;top:426.73px;font-size:14.5px;color:#5a5a5a;transform:scaleX(0.9537);">Dhavalkumar</span>
<span class="t" style="left:889.21px;top:446.73px;font-size:14.5px;color:#5a5a5a;transform:scaleX(0.9190);">Patel</span>
<span class="t" style="left:989.87px;top:426.73px;font-size:14.5px;color:#5a5a5a;transform:scaleX(0.9537);">Dhavalkumar</span>
<span class="t" style="left:989.91px;top:446.73px;font-size:14.5px;color:#5a5a5a;transform:scaleX(0.9190);">Patel</span>
<span class="t" style="left:1090.97px;top:426.73px;font-size:14.5px;color:#5a5a5a;transform:scaleX(0.9593);">Ahemdabad</span>
<span class="t" style="left:1209.37px;top:426.73px;font-size:14.5px;color:#5a5a5a;transform:scaleX(0.9362);">06:25PM</span>
<div class="row" style="top:480px;background:#cfe4fc"></div>
<div class="sep" style="top:545px"></div>
<div class="cb" style="left:116px;top:490px"></div>
<span class="t" style="left:151.88px;top:493.15px;font-size:14px;color:#666;transform:scaleX(1.0174);">5</span>
<span class="t" style="left:194.3px;top:491.00px;line-height:24px;font-size:17px;color:#222"><span style="display:inline-block;font-size:15.5px;font-weight:700;letter-spacing:0.2px;transform-origin:0 80%;transform:scale(0.95,1.13)">અમમં</span></span>
<span class="t" style="left:194.07px;top:520.18px;font-size:11.6px;transform:scaleX(0.9772);"><span style="color:#3a6abb;-webkit-text-stroke:0.1px #3a6abb;">Bhaskar Explainer </span><span style="color:#6e6e6e;">|</span></span>
<span class="t" style="left:295.21px;top:520.18px;font-size:11.6px;transform:scaleX(1.0296);"><span style="color:#3a6abb;font-weight:700;letter-spacing:-0.5px;">Cat:</span><span style="color:#3a6abb;-webkit-text-stroke:0.1px #3a6abb;">Agriculture</span></span>
<span class="t" style="left:787.77px;top:492.73px;font-size:14.5px;color:#5a5a5a;transform:scaleX(0.9537);">Dhavalkumar</span>
<span class="t" style="left:787.81px;top:512.73px;font-size:14.5px;color:#5a5a5a;transform:scaleX(0.9190);">Patel</span>
<span class="t" style="left:889.17px;top:492.73px;font-size:14.5px;color:#5a5a5a;transform:scaleX(0.9537);">Dhavalkumar</span>
<span class="t" style="left:889.21px;top:512.73px;font-size:14.5px;color:#5a5a5a;transform:scaleX(0.9190);">Patel</span>
<span class="t" style="left:989.87px;top:492.73px;font-size:14.5px;color:#5a5a5a;transform:scaleX(0.9537);">Dhavalkumar</span>
<span class="t" style="left:989.91px;top:512.73px;font-size:14.5px;color:#5a5a5a;transform:scaleX(0.9190);">Patel</span>
<span class="t" style="left:1090.97px;top:492.73px;font-size:14.5px;color:#5a5a5a;transform:scaleX(0.9593);">Ahemdabad</span>
<span class="t" style="left:1209.37px;top:492.73px;font-size:14.5px;color:#5a5a5a;transform:scaleX(0.9362);">06:09PM</span>
<div class="row" style="top:546px;background:#cfe4fc"></div>
<div class="sep" style="top:611px"></div>
<div class="cb" style="left:116px;top:556px"></div>
<span class="t" style="left:151.88px;top:559.15px;font-size:14px;color:#666;transform:scaleX(1.0174);">6</span>
<span class="t" style="left:194.3px;top:557.10px;line-height:24px;font-size:17px;color:#222"><span style="font-family:'Liberation Serif', serif;font-size:17px;letter-spacing:0.683px;-webkit-text-stroke:0.2px #222">test chandan kumar</span><span style="font-size:15.7px;letter-spacing:1.17px">1</span></span>
<span class="t" style="left:194.07px;top:586.18px;font-size:11.6px;transform:scaleX(0.9722);"><span style="color:#3a6abb;-webkit-text-stroke:0.1px #3a6abb;">Bhaskar Exclusive / Khas </span><span style="color:#6e6e6e;">|</span></span>
<span class="t" style="left:330.42px;top:586.18px;font-size:11.6px;transform:scaleX(1.0113);"><span style="color:#3a6abb;font-weight:700;letter-spacing:-0.5px;">Cat:</span><span style="color:#3a6abb;-webkit-text-stroke:0.1px #3a6abb;">Achievement</span></span>
<span class="t" style="left:787.77px;top:558.73px;font-size:14.5px;color:#5a5a5a;transform:scaleX(0.9537);">Dhavalkumar</span>
<span class="t" style="left:787.81px;top:578.73px;font-size:14.5px;color:#5a5a5a;transform:scaleX(0.9190);">Patel</span>
<span class="t" style="left:889.17px;top:558.73px;font-size:14.5px;color:#5a5a5a;transform:scaleX(0.9537);">Dhavalkumar</span>
<span class="t" style="left:889.21px;top:578.73px;font-size:14.5px;color:#5a5a5a;transform:scaleX(0.9190);">Patel</span>
<span class="t" style="left:989.87px;top:558.73px;font-size:14.5px;color:#5a5a5a;transform:scaleX(0.9537);">Dhavalkumar</span>
<span class="t" style="left:989.91px;top:578.73px;font-size:14.5px;color:#5a5a5a;transform:scaleX(0.9190);">Patel</span>
<span class="t" style="left:1090.97px;top:558.73px;font-size:14.5px;color:#5a5a5a;transform:scaleX(0.9593);">Ahemdabad</span>
<span class="t" style="left:1209.37px;top:558.73px;font-size:14.5px;color:#5a5a5a;transform:scaleX(0.9362);">05:57PM</span>
<div class="row" style="top:612px;background:#70ea70"></div>
<div class="sep" style="top:677px"></div>
<div class="cb" style="left:116px;top:622px"></div>
<span class="t" style="left:151.88px;top:625.15px;font-size:14px;color:#666;transform:scaleX(1.0174);">7</span>
<span class="t" style="left:194.3px;top:623.10px;line-height:24px;font-size:17px;color:#222"><span style="font-family:'Liberation Serif', serif;font-size:17px;letter-spacing:0.647px;-webkit-text-stroke:0.2px #222">temp save from live edit by ankit y hardik</span></span>
<span class="t" style="left:194.07px;top:652.18px;font-size:11.6px;transform:scaleX(0.9772);"><span style="color:#3a6abb;-webkit-text-stroke:0.1px #3a6abb;">Bhaskar Explainer </span><span style="color:#6e6e6e;">|</span></span>
<span class="t" style="left:295.22px;top:652.18px;font-size:11.6px;transform:scaleX(1.0085);"><span style="color:#3a6abb;font-weight:700;letter-spacing:-0.5px;">Cat:</span><span style="color:#3a6abb;-webkit-text-stroke:0.1px #3a6abb;">Accident</span></span>
<span class="t" style="left:787.77px;top:624.73px;font-size:14.5px;color:#5a5a5a;transform:scaleX(0.9537);">Dhavalkumar</span>
<span class="t" style="left:787.81px;top:644.73px;font-size:14.5px;color:#5a5a5a;transform:scaleX(0.9190);">Patel</span>
<span class="t" style="left:889.17px;top:624.73px;font-size:14.5px;color:#5a5a5a;transform:scaleX(0.9537);">Dhavalkumar</span>
<span class="t" style="left:889.21px;top:644.73px;font-size:14.5px;color:#5a5a5a;transform:scaleX(0.9190);">Patel</span>
<span class="t" style="left:990.37px;top:624.73px;font-size:14.5px;color:#5a5a5a;transform:scaleX(0.9728);">Ankitkumar</span>
<span class="t" style="left:989.78px;top:644.73px;font-size:14.5px;color:#5a5a5a;transform:scaleX(0.9360);">Swami</span>
<span class="t" style="left:1090.33px;top:624.73px;font-size:14.5px;color:#5a5a5a;transform:scaleX(0.9187);">GANDHINAGAR</span>
<span class="t" style="left:1209.37px;top:624.73px;font-size:14.5px;color:#5a5a5a;transform:scaleX(0.9362);">12:51PM</span>
<div class="row" style="top:678px;background:#cfe4fc"></div>
<div class="cb" style="left:116px;top:688px"></div>
<span class="t" style="left:151.88px;top:691.15px;font-size:14px;color:#666;transform:scaleX(1.0174);">8</span>
<span class="t" style="left:194.3px;top:689.10px;line-height:24px;font-size:17px;color:#222"><span style="font-family:'Liberation Serif', serif;font-size:17px;letter-spacing:0.606px;-webkit-text-stroke:0.2px #222">test from live edit by hardik</span></span>
<span class="t" style="left:194.07px;top:718.18px;font-size:11.6px;transform:scaleX(0.9772);"><span style="color:#3a6abb;-webkit-text-stroke:0.1px #3a6abb;">Bhaskar Explainer </span><span style="color:#6e6e6e;">|</span></span>
<span class="t" style="left:295.21px;top:718.18px;font-size:11.6px;transform:scaleX(1.0296);"><span style="color:#3a6abb;font-weight:700;letter-spacing:-0.5px;">Cat:</span><span style="color:#3a6abb;-webkit-text-stroke:0.1px #3a6abb;">Agriculture</span></span>
<span class="t" style="left:787.77px;top:690.73px;font-size:14.5px;color:#5a5a5a;transform:scaleX(0.9537);">Dhavalkumar</span>
<span class="t" style="left:787.81px;top:710.73px;font-size:14.5px;color:#5a5a5a;transform:scaleX(0.9190);">Patel</span>
<span class="t" style="left:889.17px;top:690.73px;font-size:14.5px;color:#5a5a5a;transform:scaleX(0.9537);">Dhavalkumar</span>
<span class="t" style="left:889.21px;top:710.73px;font-size:14.5px;color:#5a5a5a;transform:scaleX(0.9190);">Patel</span>
<span class="t" style="left:990.37px;top:690.73px;font-size:14.5px;color:#5a5a5a;transform:scaleX(0.9728);">Ankitkumar</span>
<span class="t" style="left:989.78px;top:710.73px;font-size:14.5px;color:#5a5a5a;transform:scaleX(0.9360);">Swami</span>
<span class="t" style="left:1090.33px;top:690.73px;font-size:14.5px;color:#5a5a5a;transform:scaleX(0.9187);">GANDHINAGAR</span>
<span class="t" style="left:1209.37px;top:690.73px;font-size:14.5px;color:#5a5a5a;transform:scaleX(0.9362);">12:46PM</span>
<div class="a" style="left:1160px;top:216px;width:119px;height:66px;overflow:hidden"><div class="a" style="left:14px;top:9px;width:110px;height:70px;background:#fff;border-radius:6px 0 0 0;box-shadow:-2.5px 0 4px rgba(40,60,100,.42),0 -1px 3px rgba(40,60,100,.14)"></div></div>
<div class="pill" style="left:1184px;top:235px;width:40px;height:40px;border-radius:50%"></div>
<svg style="left:1182px;top:233px" width="44" height="44" viewBox="0 0 44 44" fill="none" stroke="#3b6bbd" stroke-width="1" stroke-linecap="round" stroke-linejoin="round">
<path d="M14.4 14.8 V12.4 H27.9 V31.2"/><path d="M27.2 12.8 V28" stroke-width="0.8"/><path d="M28.2 26.4 H31.5 V29 C31.5 30.4 30.6 31.2 29.4 31.2 H16 C15 31.2 14.4 30.5 14.4 29.5 V26.2"/>
<path d="M12.5 20.5 C14.6 17.4 22.3 17.4 24.6 20.5 C22.3 23.6 14.6 23.6 12.5 20.5 Z"/><circle cx="18.4" cy="20.5" r="2.2"/><circle cx="18.4" cy="20.3" r="0.9" fill="#3b6bbd"/>
<path d="M18.5 14 V15.7 M16.2 15.6 L16.9 16.8 M20.9 15.6 L20.2 16.8 M24.1 14.6 H25.8 M24.1 16.5 H25.8 M24.1 18.4 H25.8 M25.1 22.3 H25.8 M23.4 24.5 H25.8 M14.5 24.5 H15"/>
<rect x="17.1" y="26.2" width="8.9" height="3.2"/></svg>
<div class="pill" style="left:1229px;top:235px;width:40px;height:40px;border-radius:50%"></div>
<svg style="left:1239.1px;top:245px" width="20" height="20" viewBox="0 0 20 20"><circle cx="10" cy="4.2" r="1.7" fill="#3262b5"/><circle cx="10" cy="10.15" r="1.7" fill="#3262b5"/><circle cx="10" cy="15.9" r="1.7" fill="#3262b5"/></svg>
<div class="a" style="left:1279px;top:176px;width:6px;height:670px;background:#f0f0f0"></div>
<div class="a" style="left:1279px;top:176px;width:6px;height:621px;background:#3165b3;border-radius:3px"></div>
<div class="a" style="left:106px;top:794px;width:1173px;height:1px;background:#c4c4c4"></div>
<span class="t" style="left:116.30px;top:813.64px;font-size:14.6px;color:#3566b9;transform:scaleX(0.9150);-webkit-text-stroke:0.4px #3566b9;">8 Stories</span>
<span class="t" style="left:172.20px;top:813.64px;font-size:14.6px;color:#333;">|</span>
<span class="t" style="left:179.77px;top:813.64px;font-size:14.6px;color:#333;transform:scaleX(0.9251);">1 to 8 Records</span>
<div class="a" style="left:1099px;top:800px;width:90px;height:41px;border:1px solid #c5cfdc;border-radius:21px;background:#fff"></div>
<span class="t" style="left:1114.28px;top:812.96px;font-size:16px;color:#222;">1</span>
<svg style="left:1162.7px;top:817.9px" width="10.8" height="6.2" viewBox="0 0 10.8 6.2"><path d="M0.8 0.8 L5.4 5.4 L10.0 0.8" fill="none" stroke="#222" stroke-width="1.5" stroke-linecap="round" stroke-linejoin="round"/></svg>
<div class="a" style="left:1199px;top:803px;width:70px;height:36px;border:1px solid #c6c6c6;border-radius:18px;background:#fff"></div>
<div class="a" style="left:1202px;top:806px;width:30px;height:30px;border-radius:50%;background:#cbcbcb"></div>
<div class="a" style="left:1236px;top:806px;width:30px;height:30px;border-radius:50%;background:#cbcbcb"></div>
<svg style="left:1214px;top:815px" width="7" height="12" viewBox="0 0 7 12"><path d="M6 1 L1 6 L6 11" fill="none" stroke="#555" stroke-width="1.1" stroke-linecap="round" stroke-linejoin="round"/></svg>
<svg style="left:1247.5px;top:815px" width="7" height="12" viewBox="0 0 7 12"><path d="M1 1 L6 6 L1 11" fill="none" stroke="#555" stroke-width="1.1" stroke-linecap="round" stroke-linejoin="round"/></svg>
<div class="a" style="left:1310px;top:175px;width:579px;height:672px;border:1px solid #c9c9c9;border-top:2px solid #c6c6c6;border-radius:9px;background:#fdfdfd"></div>
<div class="a" style="left:1874px;top:653px;width:40px;height:42px;border-radius:7px;background:rgba(255,255,255,.5);border:1px solid rgba(240,240,246,.5)"></div>
<div class="a" style="left:1883px;top:662px;width:24.4px;height:24px;border-radius:3.5px;background:linear-gradient(135deg,#f2f2f9 0%,#f1f0f8 50%,#e9dcf6 72%,#cd9ff0 100%);opacity:.92"></div>
<svg style="left:1883px;top:662px" width="25" height="24" viewBox="0 0 25 24" fill="none" stroke="#a6a6ae" stroke-width="1.2" stroke-linecap="round" stroke-linejoin="round"><path d="M5.4 6.8 L8.6 9.2 L5.4 11.6 M19 6.8 L15.8 9.2 L19 11.6 M10.6 11.4 Q12.2 12.8 13.8 11.4"/></svg>
<div class="a" style="left:1888px;top:654px;width:1px;height:40px;background:#c4c4c4"></div>
<div class="a" style="left:1904px;top:654px;width:1px;height:40px;background:#c4c4c4"></div>
</div>
</body>
</html>
